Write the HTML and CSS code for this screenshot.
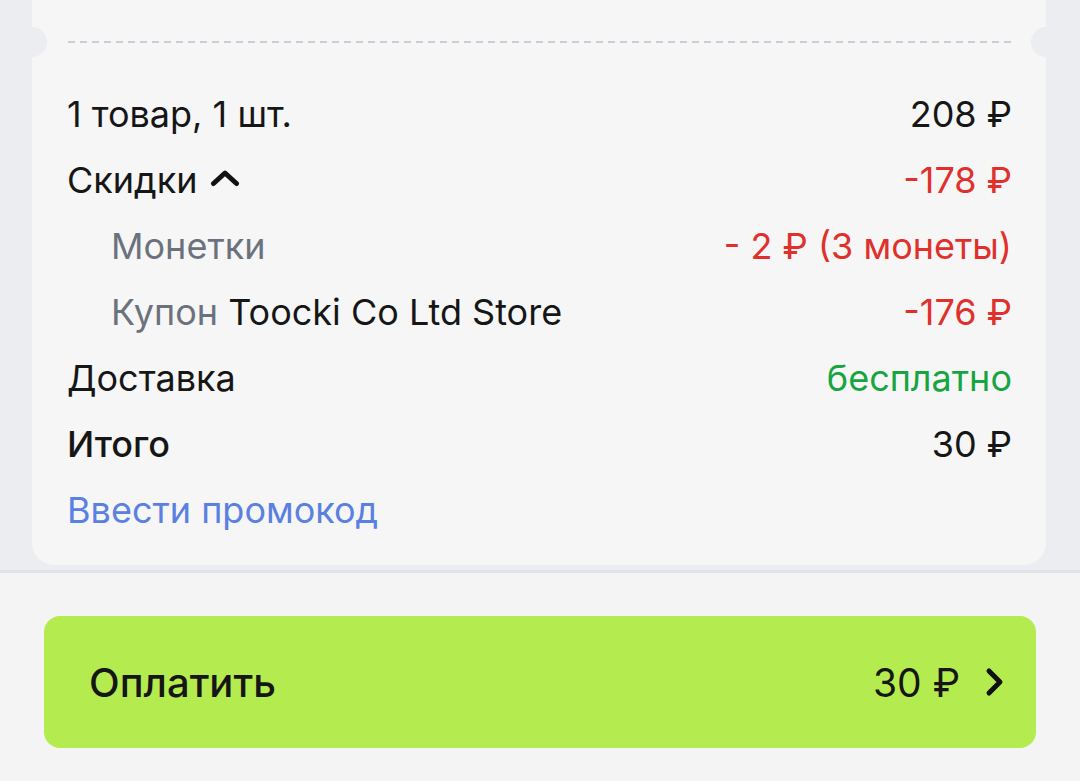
FILE: index.html
```html
<!DOCTYPE html>
<html lang="ru">
<head>
<meta charset="utf-8">
<link rel="stylesheet" href="styles.css">
</head>
<body>
<div class="top">
  <div class="card">
    <div class="tear">
      <span class="notch notch-l"></span>
      <div class="dash"></div>
      <span class="notch notch-r"></span>
    </div>
    <div class="rows">
      <div class="row"><span>1 товар, 1 шт.</span><span>208 ₽</span></div>
      <div class="row"><span class="toggle">Скидки <svg class="caret" viewBox="0 0 30 18" width="30" height="18"><path d="M3.5 14.5 L15 4 L26.5 14.5" fill="none" stroke="#111" stroke-width="5" stroke-linecap="round" stroke-linejoin="round"/></svg></span><span class="red">-178 ₽</span></div>
      <div class="row sub"><span class="muted">Монетки</span><span class="red">- 2 ₽ (3 монеты)</span></div>
      <div class="row sub"><span><span class="muted">Купон</span> Toocki Co Ltd Store</span><span class="red">-176 ₽</span></div>
      <div class="row"><span>Доставка</span><span class="green">бесплатно</span></div>
      <div class="row total"><span>Итого</span><span class="sum">30 ₽</span></div>
      <div class="row"><span class="link">Ввести промокод</span></div>
    </div>
  </div>
</div>
<div class="bottom">
  <button class="pay">
    <span class="pay-label">Оплатить</span>
    <span class="pay-right">30 ₽ <svg class="chev" viewBox="0 0 20 30" width="20" height="30"><path d="M4 4 L15 15 L4 26" fill="none" stroke="#111" stroke-width="5" stroke-linecap="round" stroke-linejoin="round"/></svg></span>
  </button>
</div>
</body>
</html>
```

FILE: styles.css
```css
* { box-sizing: border-box; }
html, body {
  margin: 0;
  padding: 0;
  width: 1080px;
  height: 781px;
  overflow: hidden;
  font-family: Inter, "Noto Sans", "Liberation Sans", sans-serif;
  color: #161616;
}
body { background: #f4f4f5; }

.top {
  background: #ebedf0;
  padding: 0 34px 0 32px;
  height: 570px;
}
.card {
  background: #f6f6f7;
  height: 565px;
  border-radius: 0 0 22px 22px;
  position: relative;
}
.tear {
  position: relative;
  height: 81px;
  padding-top: 41px;
}
.dash {
  margin: 0 34px 0 36px;
  height: 2px;
  background: repeating-linear-gradient(90deg, #c9cfd8 0 7px, transparent 7px 12px);
}
.notch {
  position: absolute;
  top: 27px;
  width: 30px;
  height: 30px;
  border-radius: 50%;
  background: #ebedf0;
}
.notch-l { left: -15px; }
.notch-r { right: -15px; }

.rows {
  padding: 0 34px 0 35px;
}
.row {
  display: flex;
  justify-content: space-between;
  align-items: center;
  height: 66px;
  font-size: 36px;
}
.row.sub { padding-left: 44px; }
.toggle { display: inline-flex; align-items: center; gap: 12px; }
.caret { width: 30px; height: 18px; margin-top: -4px; }
.muted { color: #6c727d; }
.red { color: #e0302b; }
.green { color: #17a53f; }
.link { color: #5a80e2; }
.total span:first-child { font-weight: 500; }

.bottom {
  border-top: 3px solid #dfe4ea;
  padding: 43px 44px 0 44px;
}
.pay {
  width: 992px;
  height: 132px;
  border: 0;
  border-radius: 16px;
  background: #b4ec4f;
  display: flex;
  align-items: center;
  justify-content: space-between;
  padding: 0 31px 0 45px;
  font-family: inherit;
  font-size: 40px;
  font-weight: 500;
  color: #161616;
}
.pay-right { display: inline-flex; align-items: center; gap: 25px; font-weight: 400; font-size: 39px; }
.chev { width: 20px; height: 30px; }
```
